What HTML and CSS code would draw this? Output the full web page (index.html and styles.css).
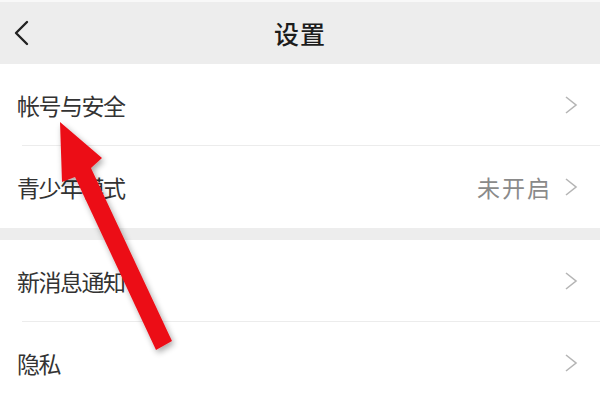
FILE: index.html
```html
<!DOCTYPE html>
<html>
    <head>
        <title>设置</title>
        <link rel="stylesheet" href="styles.css">
    </head>
    <body>
        <div id="page">
            <div class="topbar">
                <svg class="back" width="16" height="26" viewBox="0 0 16 26">
                    <polyline points="13,2 2,13 13,24" fill="none" stroke="#222" stroke-width="2.4" stroke-linecap="round" stroke-linejoin="round"/>
                </svg>
                <div class="title">设置</div>
            </div>
            <div class="group">
                <div class="row">
                    <span class="label">帐号与安全</span>
                    <span class="right"><svg class="chev" width="14" height="20" viewBox="0 0 14 20"><polyline points="2,2 12,10 2,18" fill="none" stroke="#b5b5b5" stroke-width="1.6"/></svg></span>
                </div>
                <div class="row">
                    <span class="label">青少年模式</span>
                    <span class="right"><span class="value">未开启</span><svg class="chev" width="14" height="20" viewBox="0 0 14 20"><polyline points="2,2 12,10 2,18" fill="none" stroke="#b5b5b5" stroke-width="1.6"/></svg></span>
                </div>
            </div>
            <div class="group">
                <div class="row">
                    <span class="label">新消息通知</span>
                    <span class="right"><svg class="chev" width="14" height="20" viewBox="0 0 14 20"><polyline points="2,2 12,10 2,18" fill="none" stroke="#b5b5b5" stroke-width="1.6"/></svg></span>
                </div>
                <div class="row">
                    <span class="label">隐私</span>
                    <span class="right"><svg class="chev" width="14" height="20" viewBox="0 0 14 20"><polyline points="2,2 12,10 2,18" fill="none" stroke="#b5b5b5" stroke-width="1.6"/></svg></span>
                </div>
            </div>
            <!-- red annotation arrow drawn over the list -->
            <svg class="arrow" width="600" height="400" viewBox="0 0 600 400">
                <defs>
                    <filter id="soft" x="-20%" y="-20%" width="140%" height="140%">
                        <feGaussianBlur in="SourceAlpha" stdDeviation="3"/>
                        <feOffset dx="2" dy="3" result="b"/>
                        <feComponentTransfer><feFuncA type="linear" slope="0.35"/></feComponentTransfer>
                        <feMerge><feMergeNode/><feMergeNode in="SourceGraphic"/></feMerge>
                    </filter>
                </defs>
                <polygon filter="url(#soft)" fill="#ec1119" points="60,122 102,158 91,168 172,341 156,350 75,177 62,182"/>
            </svg>
        </div>
    </body>
</html>
```

FILE: styles.css
```css
body{
    margin: 0;
    background: #ededed;
    font-family: "Noto Sans CJK SC", "Noto Sans", sans-serif;
}
#page{
    position: relative;
    width: 600px;
    height: 400px;
    overflow: hidden;
    background: #ededed;
}
.topbar{
    position: relative;
    height: 62px;
    border-top: 2px solid #f8f8f8;
    display: flex;
    align-items: center;
    justify-content: center;
    background: #ededed;
}
.back{
    position: absolute;
    left: 14px;
    top: 18px;
}
.title{
    font-size: 25px;
    font-weight: 500;
    color: #1c1c1c;
    letter-spacing: 1px;
}
.group{
    background: #ffffff;
    margin-bottom: 12px;
}
.row{
    height: 82px;
    display: flex;
    align-items: center;
    justify-content: space-between;
    padding: 0 22px 0 17px;
    position: relative;
}
.row + .row::before{
    content: "";
    position: absolute;
    left: 22px;
    right: 0;
    top: -1px;
    height: 1px;
    background: #ececec;
}
.label{
    font-size: 23px;
    letter-spacing: -1.5px;
    color: #333333;
}
.right{
    display: flex;
    align-items: center;
    gap: 12px;
}
.value{
    font-size: 23px;
    letter-spacing: 2px;
    color: #8a8a8a;
}
.arrow{
    position: absolute;
    left: 0;
    top: 0;
}
```
